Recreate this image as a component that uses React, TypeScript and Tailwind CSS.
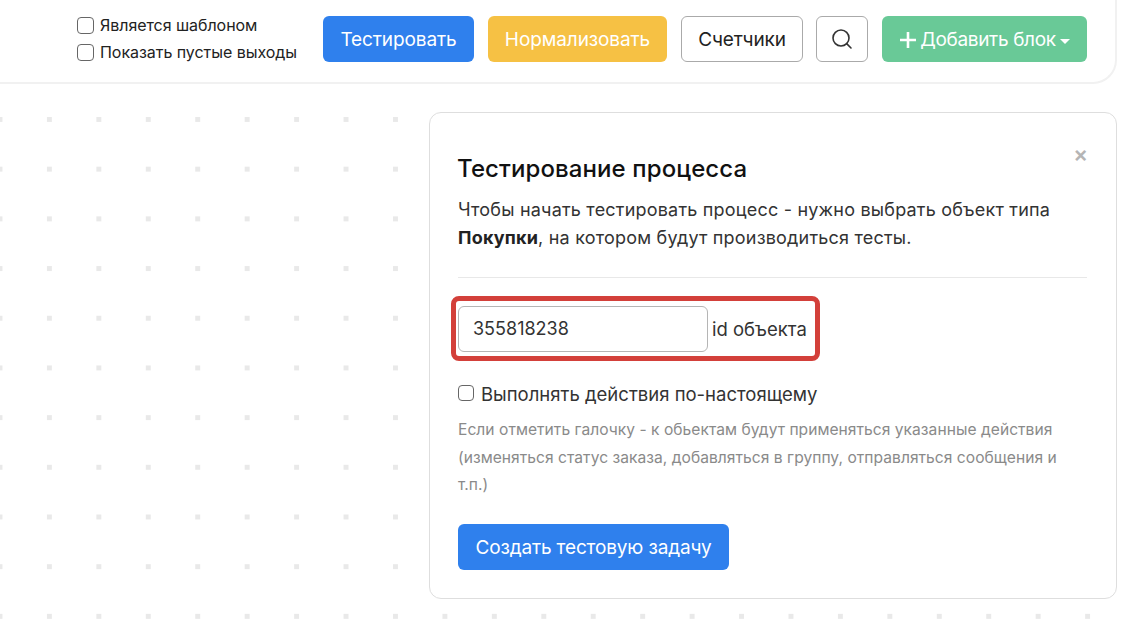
import { Search } from 'lucide-react'

function Check({ label }: { label: string }) {
  return (
    <label className="flex items-center gap-[6px] h-[24px] text-[16px] tracking-[-0.05px] text-[#222]">
      <input
        type="checkbox"
        className="appearance-none w-[17px] h-[17px] rounded-[4px] border border-[#666] bg-white"
      />
      {label}
    </label>
  )
}

export default function App() {
  return (
    <div className="relative w-[1128px] h-[624px] overflow-hidden bg-[#e9e9e9] font-['Inter',sans-serif] bg-[linear-gradient(to_right,transparent_5px,#fff_5px),linear-gradient(to_bottom,transparent_5px,#fff_5px)] bg-[size:49.45px_49.7px] bg-[position:-2.5px_117px]">
      {/* top toolbar */}
      <div className="w-[1117px] h-[84px] bg-white border-r-2 border-b-2 border-[#f1f1f1] rounded-br-[24px] pl-[77px] pt-[13px] flex">
        <div className="w-[246px]">
          <Check label="Является шаблоном" />
          <div className="mt-[3px]">
            <Check label="Показать пустые выходы" />
          </div>
        </div>
        <div className="flex gap-[14px] mt-[3px] h-[46px] text-[19px] tracking-[-0.1px]">
          <button className="w-[151px] pt-[2px] rounded-[6px] bg-[#2f80ed] text-white">Тестировать</button>
          <button className="w-[179px] pt-[2px] rounded-[6px] bg-[#f6c144] text-white">Нормализовать</button>
          <button className="w-[122px] pt-[2px] rounded-[6px] border border-[#aaa] bg-white text-[#222]">Счетчики</button>
          <button className="w-[52px] rounded-[6px] border border-[#aaa] bg-white text-[#333] flex items-center justify-center -ml-[1px]">
            <Search size={24} strokeWidth={1.6} />
          </button>
          <button className="w-[205px] pt-[2px] rounded-[6px] bg-[#69c997] text-white flex items-center justify-center tracking-[-0.35px]">
            <svg width="18" height="18" viewBox="0 0 18 18" className="mr-[3px]">
              <path d="M9 1v16M1 9h16" stroke="#fff" strokeWidth="2.6" />
            </svg>
            Добавить блок
            <svg width="10" height="5" viewBox="0 0 10 5" className="ml-[4px] mt-[2px]">
              <path d="M0 0h10L5 5z" fill="#fff" />
            </svg>
          </button>
        </div>
      </div>

      {/* test panel */}
      <div className="relative w-[688px] h-[487px] ml-[429px] mt-[28px] bg-white border border-[#dedede] rounded-[12px] pl-[28px] pr-[29px] pt-[40px]">
        <span className="absolute right-[28px] top-[27px] text-[22px] leading-[28px] font-semibold text-[#b5b5b5]">×</span>
        <h2 className="-ml-[1px] text-[24px] leading-[32px] tracking-[0.1px] font-medium text-[#111]">Тестирование процесса</h2>
        <p className="mt-[11px] text-[18px] leading-[27.5px] tracking-[0.2px] text-[#333]">
          Чтобы начать тестировать процесс - нужно выбрать объект типа
          <br />
          <b className="font-bold text-[#222]">Покупки</b>, на котором будут производиться тесты.
        </p>
        <div className="mt-[26px] h-px bg-[#e8e8e8]" />

        <div className="mt-[18px] -ml-[7px] w-[369px] h-[65px] border-[5px] border-[#d3403a] rounded-[8px] flex items-center pl-[2px]">
          <input
            readOnly
            value="355818238"
            className="w-[250px] h-[46px] rounded-[6px] border border-[#b5b5b5] pl-[14px] text-[18px] text-[#333] outline-none"
          />
          <span className="ml-[4px] mt-[2px] text-[18.5px] text-[#333]">id объекта</span>
        </div>

        <label className="mt-[21px] flex items-center gap-[7px] h-[26px] text-[18.5px] text-[#333]">
          <input
            type="checkbox"
            className="appearance-none w-[16px] h-[16px] rounded-[4px] border border-[#666] bg-white -mt-[4px]"
          />
          Выполнять действия по-настоящему
        </label>
        <p className="mt-[8px] text-[15.6px] leading-[27.5px] tracking-[0.03px] text-[#8a8a8a]">
          Если отметить галочку - к обьектам будут применяться указанные действия
          <br />
          (изменяться статус заказа, добавляться в группу, отправляться сообщения и
          <br />
          т.п.)
        </p>
        <button className="mt-[25px] w-[271px] h-[46px] pt-[3px] rounded-[6px] bg-[#2f80ed] text-white text-[19px] tracking-[-0.15px]">
          Создать тестовую задачу
        </button>
      </div>
    </div>
  )
}
